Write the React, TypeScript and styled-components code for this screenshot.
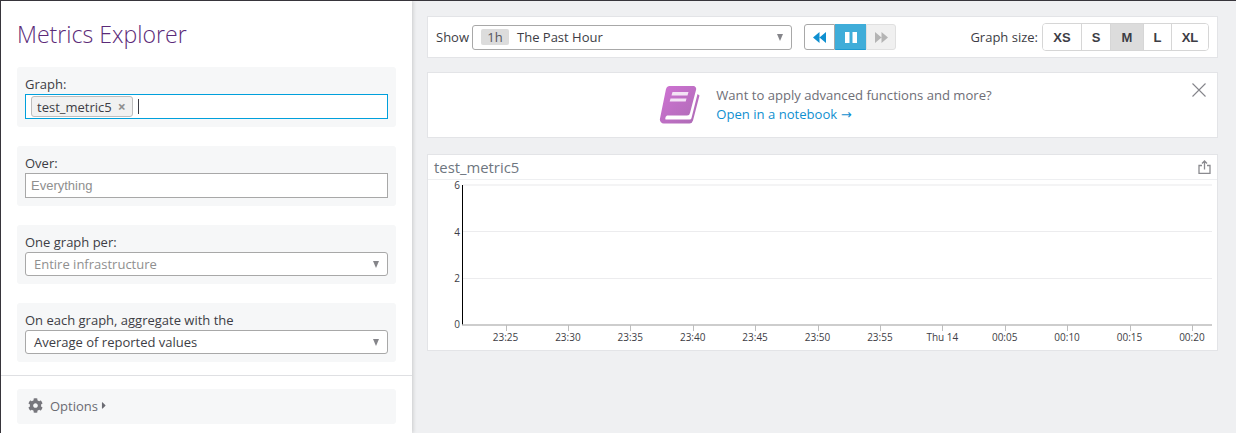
import React from 'react';
import styled, { createGlobalStyle } from 'styled-components';
import { FaCog, FaCaretRight } from 'react-icons/fa';

const GlobalStyle = createGlobalStyle`
  html, body {
    margin: 0;
    padding: 0;
    height: 100%;
    overflow: hidden;
    background: #eff0f2;
  }
  body {
    font-family: "Open Sans", "Noto Sans", sans-serif;
    font-size: 13px;
    color: #3d3d45;
  }
  * { box-sizing: border-box; }
`;

const Page = styled.div`
  display: flex;
  width: 1236px;
  height: 433px;
  border-top: 1px solid #37353b;
  overflow: hidden;
`;

const SideBar = styled.aside`
  width: 412px;
  height: 432px;
  flex: none;
  background: #fff;
  border-left: 1px solid #37353b;
  box-shadow: 1px 0 4px rgba(0, 0, 0, 0.16);
  display: flex;
  flex-direction: column;
`;

const Title = styled.h1`
  margin: 18px 0 0 16px;
  height: 30px;
  font-size: 23.1px;
  line-height: 30px;
  font-weight: 300;
  color: #5b2a78;
`;

const Fields = styled.div`
  display: flex;
  flex-direction: column;
  gap: 19px;
  padding: 18px 16px 13px 16px;
  border-bottom: 1px solid #dfe0e3;
`;

const Field = styled.section<{ $short?: boolean }>`
  height: ${(p) => (p.$short ? 59 : 60)}px;
  padding: 7px 8px 0 8px;
  background: #f6f7f8;
  border-radius: 3px;
`;

const FieldLabel = styled.div`
  height: 20px;
  font-size: 13px;
  line-height: 20px;
  color: #3d3d45;
`;

const TagInput = styled.div`
  display: flex;
  align-items: center;
  height: 25px;
  padding-left: 5px;
  background: #fff;
  border: 1px solid #00a0dc;
`;

const Tag = styled.span`
  display: flex;
  align-items: center;
  height: 21px;
  padding: 0 6px 0 5px;
  gap: 6px;
  border: 1px solid #bdbdbd;
  border-radius: 3px;
  background: #f1f1f1;
  color: #3d3d45;
  font-size: 13px;
`;

const TagClose = styled.span`
  font-size: 14px;
  font-weight: 700;
  line-height: 1;
  color: #8e8e8e;
`;

const Caret = styled.span`
  width: 1px;
  height: 15px;
  margin-left: 5px;
  background: #3d3d45;
`;

const TextBox = styled.div`
  height: 25px;
  padding-left: 5px;
  background: #fff;
  border: 1px solid #a8a8a8;
  font-family: "Liberation Sans", Arial, sans-serif;
  font-size: 13px;
  line-height: 23px;
  color: #8f8f8f;
`;

const Select = styled.div<{ $muted?: boolean }>`
  display: flex;
  align-items: center;
  justify-content: space-between;
  height: 24px;
  padding: 0 8px 0 8px;
  background: #fff;
  border: 1px solid #a8a8a8;
  border-radius: 3px;
  font-size: 13px;
  color: ${(p) => (p.$muted ? '#8f8f8f' : '#3d3d45')};
`;

const ArrowSvg = styled.svg`
  width: 6px;
  height: 7px;
  flex: none;
`;

const SelectArrow = () => (
  <ArrowSvg viewBox="0 0 6 7">
    <path d="M0 0h6L3 7z" fill="#85858a" />
  </ArrowSvg>
);

const OptionsBar = styled.div`
  display: flex;
  align-items: center;
  height: 35px;
  margin: 13px 16px 0 16px;
  padding: 0 0 2px 11px;
  background: #f6f7f8;
  border-radius: 3px;
  color: #6b6b73;
  font-size: 13px;
`;

const OptionsIcon = styled(FaCog)`
  width: 15px;
  height: 15px;
  margin-right: 7px;
  color: #77777d;
`;

const OptionsArrow = styled(FaCaretRight)`
  width: 10px;
  height: 11px;
  margin-left: 1px;
  color: #6b6b73;
`;

const Main = styled.main`
  flex: 1;
  display: flex;
  flex-direction: column;
  padding: 15px 18px 0 15px;
`;

const Card = styled.div`
  background: #fff;
  border: 1px solid #e3e4e7;
`;

const Toolbar = styled(Card)`
  display: flex;
  align-items: center;
  height: 42px;
  padding: 0 8px;
`;

const ToolbarLabel = styled.span`
  font-size: 13px;
  color: #3d3d45;
`;

const TimeSelect = styled.div`
  display: flex;
  align-items: center;
  width: 320px;
  height: 25px;
  margin-left: 3px;
  padding: 0 8px;
  border: 1px solid #a8a8a8;
  border-radius: 3px;
  font-size: 13px;
  color: #3d3d45;
`;

const TimeBadge = styled.span`
  width: 28px;
  height: 16px;
  margin-right: 8px;
  background: #dcdcdc;
  border-radius: 2px;
  text-align: center;
  font-size: 13px;
  line-height: 16px;
  color: #55555c;
`;

const TimeArrowSlot = styled.span`
  display: flex;
  margin-left: auto;
`;

const PlayGroup = styled.div`
  display: flex;
  height: 26px;
  margin-left: 12px;
`;

const PlayButton = styled.div<{ $kind: 'back' | 'active' | 'off' }>`
  display: flex;
  align-items: center;
  justify-content: center;
  width: ${(p) => (p.$kind === 'off' ? 30 : 31)}px;
  border: 1px solid
    ${(p) => (p.$kind === 'back' ? '#a8a8a8' : p.$kind === 'active' ? '#3fadd9' : '#e0e0e0')};
  border-bottom-color: ${(p) => (p.$kind === 'active' ? '#1f9ad0' : undefined)};
  border-radius: ${(p) =>
    p.$kind === 'back' ? '3px 0 0 3px' : p.$kind === 'off' ? '0 3px 3px 0' : '0'};
  background: ${(p) => (p.$kind === 'active' ? '#3fadd9' : p.$kind === 'off' ? '#f0f0f0' : '#fff')};
`;

const SizeLabel = styled(ToolbarLabel)`
  margin-left: auto;
  margin-right: 4px;
`;

const SizeGroup = styled.div`
  display: flex;
  height: 28px;
  border: 1px solid #d6d6d6;
  border-radius: 4px;
  overflow: hidden;
`;

const SizeButton = styled.div<{ $width: number; $active?: boolean }>`
  display: flex;
  align-items: center;
  justify-content: center;
  width: ${(p) => p.$width}px;
  border-left: 1px solid #d6d6d6;
  background: ${(p) => (p.$active ? '#dcdcdc' : '#fff')};
  font-family: "Liberation Sans", Arial, sans-serif;
  font-size: 13px;
  font-weight: 700;
  color: #3d3d45;
  &:first-child {
    border-left: 0;
  }
`;

const Banner = styled(Card)`
  position: relative;
  display: flex;
  align-items: center;
  justify-content: center;
  height: 66px;
  margin-top: 14px;
  padding-left: 6px;
  gap: 16px;
`;

const BannerText = styled.div`
  font-size: 13.1px;
  line-height: 19px;
  color: #6e6e76;
`;

const BannerLink = styled.a`
  display: block;
  color: #0f8fd0;
  text-decoration: none;
`;

const LinkArrow = styled.span`
  font-family: "DejaVu Sans", sans-serif;
  font-size: 13px;
`;

const CloseIcon = styled.svg`
  position: absolute;
  top: 10px;
  right: 11px;
  width: 14px;
  height: 14px;
`;

const GraphCard = styled(Card)`
  height: 197px;
  margin-top: 16px;
`;

const GraphHeader = styled.div`
  display: flex;
  align-items: center;
  justify-content: space-between;
  height: 25px;
  padding: 0 6px;
  border-bottom: 1px solid #eeeff1;
  font-size: 14.85px;
  color: #6e7680;
`;

const Plot = styled.svg`
  display: block;
  width: 789px;
  height: 170px;
  overflow: visible;
`;

const AxisLabel = styled.text`
  font-family: "Open Sans", "Noto Sans", sans-serif;
  font-size: 10px;
  fill: #3d3d45;
`;

const times = ['23:25', '23:30', '23:35', '23:40', '23:45', '23:50', '23:55', 'Thu 14', '00:05', '00:10', '00:15', '00:20'];

const TickChart = () => (
  <Plot viewBox="0 0 789 170">
    <line x1="35" x2="784" y1="5" y2="5" stroke="#f4f4f5" strokeWidth="2" />
    <line x1="35" x2="784" y1="51.5" y2="51.5" stroke="#ececee" />
    <line x1="35" x2="784" y1="98.5" y2="98.5" stroke="#ececee" />
    <line x1="34.5" x2="34.5" y1="5" y2="145" stroke="#000" />
    <line x1="34" x2="784" y1="145" y2="145" stroke="#bdbdbd" strokeWidth="1.5" />
    {[['6', 9], ['4', 56], ['2', 102], ['0', 148]].map(([v, y]) => (
      <AxisLabel key={v} x="32" y={y} textAnchor="end">{v}</AxisLabel>
    ))}
    {times.map((t, i) => {
      const x = 77.5 + i * 62.4;
      return (
        <g key={t}>
          <line x1={Math.round(x) + 0.5} x2={Math.round(x) + 0.5} y1="145" y2="151" stroke="#bdbdbd" />
          <AxisLabel x={x} y="161" textAnchor="middle">{t}</AxisLabel>
        </g>
      );
    })}
  </Plot>
);

export default function App() {
  return (
    <>
      <GlobalStyle />
      <Page>
        <SideBar>
          <Title>Metrics Explorer</Title>
          <Fields>
            <Field>
              <FieldLabel>Graph:</FieldLabel>
              <TagInput>
                <Tag>test_metric5 <TagClose>×</TagClose></Tag>
                <Caret />
              </TagInput>
            </Field>
            <Field>
              <FieldLabel>Over:</FieldLabel>
              <TextBox>Everything</TextBox>
            </Field>
            <Field $short>
              <FieldLabel>One graph per:</FieldLabel>
              <Select $muted>Entire infrastructure <SelectArrow /></Select>
            </Field>
            <Field $short>
              <FieldLabel>On each graph, aggregate with the</FieldLabel>
              <Select>Average of reported values <SelectArrow /></Select>
            </Field>
          </Fields>
          <OptionsBar>
            <OptionsIcon />
            Options
            <OptionsArrow />
          </OptionsBar>
        </SideBar>
        <Main>
          <Toolbar>
            <ToolbarLabel>Show</ToolbarLabel>
            <TimeSelect>
              <TimeBadge>1h</TimeBadge>
              The Past Hour
              <TimeArrowSlot><SelectArrow /></TimeArrowSlot>
            </TimeSelect>
            <PlayGroup>
              <PlayButton $kind="back">
                <svg width="13" height="11" viewBox="0 0 13 11"><path d="M6.5 0v11L0 5.5zM13 0v11L6.5 5.5z" fill="#0f8fd0" /></svg>
              </PlayButton>
              <PlayButton $kind="active">
                <svg width="12" height="11" viewBox="0 0 12 11"><path d="M0 0h4.5v11H0zM7.5 0H12v11H7.5z" fill="#fff" /></svg>
              </PlayButton>
              <PlayButton $kind="off">
                <svg width="13" height="11" viewBox="0 0 13 11"><path d="M0 0v11l6.5-5.5zM6.5 0v11L13 5.5z" fill="#b4b4b4" /></svg>
              </PlayButton>
            </PlayGroup>
            <SizeLabel>Graph size:</SizeLabel>
            <SizeGroup>
              <SizeButton $width={38}>XS</SizeButton>
              <SizeButton $width={29}>S</SizeButton>
              <SizeButton $width={33} $active>M</SizeButton>
              <SizeButton $width={28}>L</SizeButton>
              <SizeButton $width={37}>XL</SizeButton>
            </SizeGroup>
          </Toolbar>
          <Banner>
            <svg width="41" height="38" viewBox="0 0 41 38">
              <defs>
                <linearGradient id="book" x1="0" y1="0" x2="1" y2="1">
                  <stop offset="0" stopColor="#cf72d3" />
                  <stop offset="1" stopColor="#ad6cb5" />
                </linearGradient>
              </defs>
              <path d="M10 0h24a3 3 0 0 1 3 4l-6 23a3 3 0 0 1-3 2.5H8a3.5 3.5 0 0 0-1.5 4h24a2 2 0 0 0 2-1.5l6-24 2 1.5-6.5 25a4 4 0 0 1-3.5 3H5a4 4 0 0 1-4-5L7 3a4 4 0 0 1 3-3z" fill="url(#book)" />
              <path d="M13.5 6h16l-1 3.5h-16zM11.5 12.5h16l-.8 3h-16z" fill="#f3e3f5" />
            </svg>
            <BannerText>
              Want to apply advanced functions and more?
              <BannerLink href="#">Open in a notebook <LinkArrow>→</LinkArrow></BannerLink>
            </BannerText>
            <CloseIcon viewBox="0 0 14 14">
              <path d="M.5.5l13 13M13.5.5l-13 13" stroke="#85858b" strokeWidth="1.1" fill="none" />
            </CloseIcon>
          </Banner>
          <GraphCard>
            <GraphHeader>
              test_metric5
              <svg width="13" height="14" viewBox="0 0 13 14">
                <path d="M4 5.5H1v8h11v-8H9M6.5 9.5V1M4 3.5L6.5 1 9 3.5" stroke="#8a8a8f" strokeWidth="1.3" fill="none" />
              </svg>
            </GraphHeader>
            <TickChart />
          </GraphCard>
        </Main>
      </Page>
    </>
  );
}
